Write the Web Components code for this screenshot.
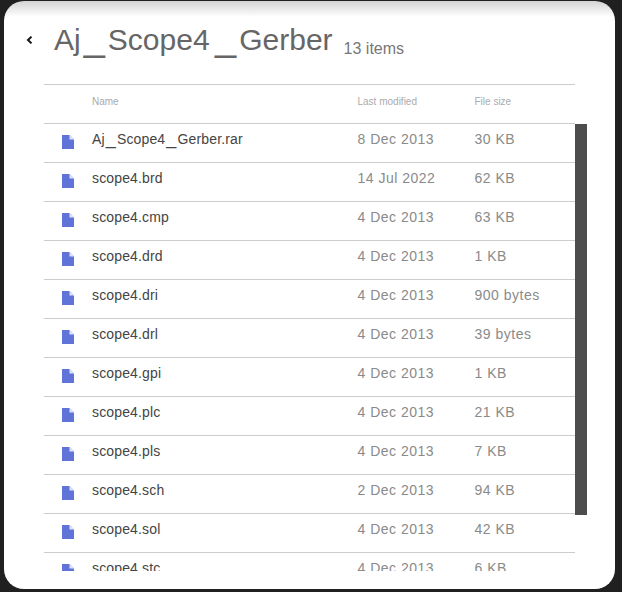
<!DOCTYPE html>
<html>
<head>
<meta charset="utf-8">
<title>Aj_Scope4_Gerber</title>
<style>
  html, body { margin: 0; height: 100%; background: #202020; overflow: hidden; }
  body { font-family: "Liberation Sans", Arial, sans-serif; }
</style>
</head>
<body>
<folder-panel name="Aj_Scope4_Gerber" count="13 items">
  <file-row name="Aj_Scope4_Gerber.rar" modified="8 Dec 2013" size="30 KB"></file-row>
  <file-row name="scope4.brd" modified="14 Jul 2022" size="62 KB"></file-row>
  <file-row name="scope4.cmp" modified="4 Dec 2013" size="63 KB"></file-row>
  <file-row name="scope4.drd" modified="4 Dec 2013" size="1 KB"></file-row>
  <file-row name="scope4.dri" modified="4 Dec 2013" size="900 bytes"></file-row>
  <file-row name="scope4.drl" modified="4 Dec 2013" size="39 bytes"></file-row>
  <file-row name="scope4.gpi" modified="4 Dec 2013" size="1 KB"></file-row>
  <file-row name="scope4.plc" modified="4 Dec 2013" size="21 KB"></file-row>
  <file-row name="scope4.pls" modified="4 Dec 2013" size="7 KB"></file-row>
  <file-row name="scope4.sch" modified="2 Dec 2013" size="94 KB"></file-row>
  <file-row name="scope4.sol" modified="4 Dec 2013" size="42 KB"></file-row>
  <file-row name="scope4.stc" modified="4 Dec 2013" size="6 KB"></file-row>
</folder-panel>

<script>
// underscores are drawn wider than the font's own glyph in the original
function setName(el, name) {
  name.split(/(_)/).forEach(part => {
    if (part === "_") {
      const us = document.createElement("span");
      us.className = "us";
      us.textContent = part;
      el.appendChild(us);
    } else {
      el.appendChild(document.createTextNode(part));
    }
  });
}

const panelTemplate = document.createElement("template");
panelTemplate.innerHTML = `
  <style>
    :host {
      display: block;
      box-sizing: border-box;
      width: 611px;
      height: 588px;
      margin: 1px 0 0 4px;
      padding: 0 40px;
      background: linear-gradient(#d4d4d4, #fff 16px);
      border-radius: 20px;
    }
    header {
      display: flex;
      align-items: flex-start;
      height: 83px;
      box-sizing: border-box;
      padding-top: 19px;
      color: #666;
    }
    .back {
      width: 10px;
      height: 10px;
      margin-left: -19px;
      margin-right: 19px;
      margin-top: 15px;
    }
    h1 {
      margin: 0;
      font-size: 30px;
      font-weight: 400;
      line-height: 40px;
      white-space: nowrap;
    }
    h1 .us { font-size: 38px; line-height: 30px; margin: 0 3px; }
    h1 .us:nth-of-type(2) { margin-left: 5.5px; }
    .count {
      margin: 20px 0 0 11px;
      font-size: 16px;
      color: #777;
    }
    .table { position: relative; width: 531px; }
    .heads {
      display: grid;
      grid-template-columns: 48px 265.5px 117px 1fr;
      align-items: center;
      height: 38px;
      border-top: 1px solid #ccc;
      font-size: 10px;
      color: #aaa;
    }
    .heads span { padding-bottom: 5px; }
    .rows {
      height: 447px;
      overflow: hidden;
      border-top: 1px solid #ccc;
    }
    .thumb {
      position: absolute;
      left: 531px;
      top: 40px;
      width: 12px;
      height: 391px;
      background: #4d4d4d;
    }
  </style>
  <header>
    <svg class="back" viewBox="0 0 10 10"><path d="M6.5 1.6 3 5l3.5 3.4" fill="none" stroke="#111" stroke-width="2"/></svg>
    <h1></h1>
    <span class="count"></span>
  </header>
  <div class="table">
    <div class="heads"><i></i><span>Name</span><span>Last modified</span><span>File size</span></div>
    <div class="rows"><slot></slot></div>
    <div class="thumb"></div>
  </div>
`;

class FolderPanel extends HTMLElement {
  constructor() {
    super();
    this.attachShadow({ mode: "open" });
    this.shadowRoot.appendChild(panelTemplate.content.cloneNode(true));
  }

  connectedCallback() {
    setName(this.shadowRoot.querySelector("h1"), this.getAttribute("name"));
    this.shadowRoot.querySelector(".count").textContent = this.getAttribute("count");
  }
}

const rowTemplate = document.createElement("template");
rowTemplate.innerHTML = `
  <style>
    :host {
      display: grid;
      grid-template-columns: 48px 265.5px 117px 1fr;
      align-items: center;
      box-sizing: border-box;
      height: 39px;
      border-bottom: 1px solid #ccc;
      font-size: 14px;
    }
    svg { width: 12px; height: 14px; margin: 0 0 2px 18px; display: block; }
    span { padding-bottom: 9px; white-space: nowrap; }
    .name { color: #444; letter-spacing: .15px; }
    .name .us { font-size: 18px; line-height: 14px; padding: 0; margin: 0 1px; }
    .meta { color: #8a8a8a; letter-spacing: .5px; }
  </style>
  <svg viewBox="0 0 12 14"><path d="M0 0h7.5L12 4.5V14H0z" fill="#5f73d9"/><path d="M7.5 0 12 4.5H7.5z" fill="#dfe4f7"/></svg>
  <span class="name"></span>
  <span class="meta modified"></span>
  <span class="meta size"></span>
`;

class FileRow extends HTMLElement {
  constructor() {
    super();
    this.attachShadow({ mode: "open" });
    this.shadowRoot.appendChild(rowTemplate.content.cloneNode(true));
  }

  connectedCallback() {
    setName(this.shadowRoot.querySelector(".name"), this.getAttribute("name"));
    this.shadowRoot.querySelector(".modified").textContent = this.getAttribute("modified");
    this.shadowRoot.querySelector(".size").textContent = this.getAttribute("size");
  }
}

customElements.define("folder-panel", FolderPanel);
customElements.define("file-row", FileRow);
</script>
</body>
</html>
